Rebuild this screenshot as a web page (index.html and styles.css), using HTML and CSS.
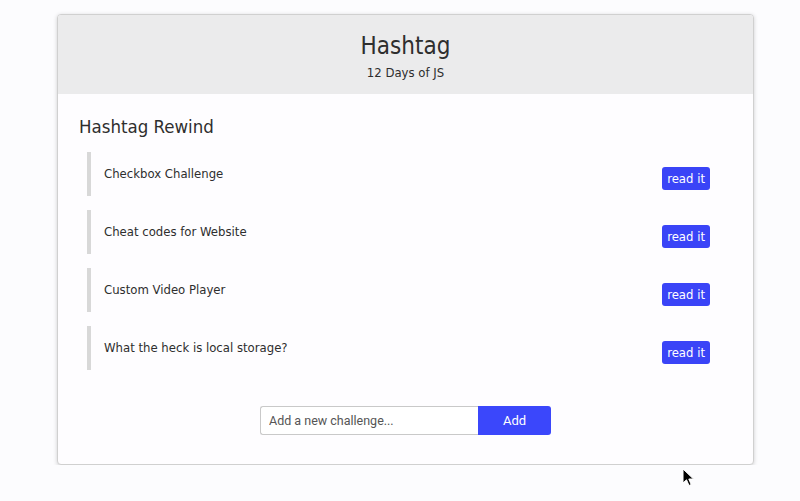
FILE: index.html
```html
<!DOCTYPE html>
<html lang="en">
<head>
    <meta charset="UTF-8">
    <meta name="viewport" content="width=device-width, initial-scale=1.0">
    <title>Hashtag</title>
    <link rel="stylesheet" href="styles.css">
</head>
<body>

<div class="container">
    <header class="header">
        <h1>Hashtag</h1>
        <p>12 Days of JS</p>
    </header>

    <div class="content">
        <h2>Hashtag Rewind</h2>

        <ul class="challenges">
            <li><span>Checkbox Challenge</span><button class="read">read it</button></li>
            <li><span>Cheat codes for Website</span><button class="read">read it</button></li>
            <li><span>Custom Video Player</span><button class="read">read it</button></li>
            <li><span>What the heck is local storage?</span><button class="read">read it</button></li>
        </ul>

        <form class="add-form">
            <input type="text" placeholder="Add a new challenge...">
            <button type="button">Add</button>
        </form>
    </div>
</div>

<svg class="cursor" width="14" height="20" viewBox="0 0 14 20">
    <path d="M1 1 L1 15 L4.5 11.8 L7 17.5 L9.2 16.5 L6.8 11 L11.5 11 Z" fill="#000" stroke="#fff" stroke-width="1"/>
</svg>

</body>
</html>
```

FILE: styles.css
```css
body {
    font-family: "DejaVu Sans Condensed", "DejaVu Sans", sans-serif;
    margin: 0;
    padding: 14px 0 0;
    background-color: #fcfcfe;
    color: #2e2e2e;
}

.container {
    width: 695px;
    margin: 0 0 0 57px;
    background-color: #fefdff;
    border: 1px solid #d0d0d0;
    border-radius: 4px;
    box-shadow: 0 1px 4px rgba(0,0,0,0.18);
    overflow: hidden;
}

.header {
    background-color: #ebebec;
    text-align: center;
    height: 79px;
    padding-top: 17px;
    box-sizing: border-box;
}

.header h1 {
    font-size: 24px;
    font-weight: normal;
    margin: 0;
    line-height: 28px;
}

.header p {
    font-size: 13px;
    margin: 5px 0 0;
}

.content {
    padding: 22px 21px 29px;
}

.content h2 {
    font-size: 18.5px;
    font-weight: normal;
    margin: 0 0 14px;
    line-height: 22px;
}

.challenges {
    list-style: none;
    margin: 0;
    padding: 0 22px 0 8px;
}

.challenges li {
    display: flex;
    justify-content: space-between;
    align-items: flex-start;
    height: 44px;
    border-left: 4px solid #d8d8d8;
    padding-left: 13px;
    margin-bottom: 14px;
}

.challenges li span {
    font-size: 13px;
    margin-top: 14px;
}

.challenges .read {
    margin-top: 15px;
    background-color: #3a44f7;
    color: #fff;
    border: none;
    border-radius: 3px;
    font-family: "DejaVu Sans Condensed", "DejaVu Sans", sans-serif;
    font-size: 13px;
    height: 23px;
    padding: 0 5px;
}

.add-form {
    display: flex;
    justify-content: center;
    margin-top: 36px;
}

.add-form input {
    width: 218px;
    height: 29px;
    box-sizing: border-box;
    border: 1px solid #c9c9c9;
    border-right: none;
    border-radius: 3px 0 0 3px;
    padding: 0 8px;
    font-family: Roboto, sans-serif;
    font-size: 12.5px;
    color: #333;
}

.add-form input::placeholder {
    color: #555;
}

.add-form button {
    width: 73px;
    height: 29px;
    background-color: #3b47fb;
    color: #fff;
    border: none;
    border-radius: 0 3px 3px 0;
    font-family: Roboto, sans-serif;
    font-size: 13px;
}

.cursor {
    position: absolute;
    left: 682px;
    top: 468px;
}
```
